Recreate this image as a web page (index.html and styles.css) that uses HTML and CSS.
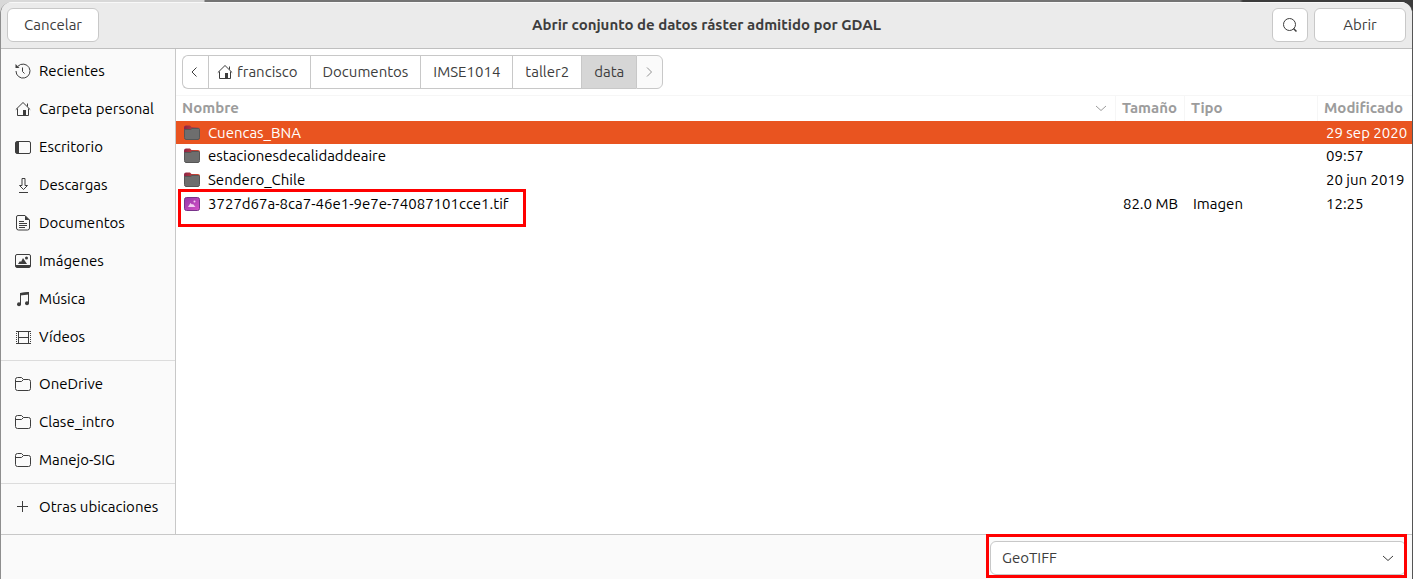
FILE: index.html
```html
<!DOCTYPE html>
<html lang="es">
<head>
<meta charset="utf-8">
<title>Abrir conjunto de datos ráster admitido por GDAL</title>
<link rel="stylesheet" href="styles.css">
</head>
<body>
<svg class="defs" aria-hidden="true">
  <defs>
    <linearGradient id="purple" x1="0" y1="0" x2="1" y2="1"><stop offset="0" stop-color="#9436a8"/><stop offset="1" stop-color="#d653c8"/></linearGradient>
    <linearGradient id="tab" x1="0" y1="0" x2="1" y2="0"><stop offset="0" stop-color="#8c2347"/><stop offset="1" stop-color="#d9502f"/></linearGradient>
  </defs>
  <symbol id="home" viewBox="0 0 16 16"><path d="M.8 8.6 8 1.5l7.2 7.1M2.5 7.5v7h11v-7M12.5 5.5V2.5" fill="none" stroke="currentColor"/><path d="M8 9h3v6H8z" fill="currentColor"/></symbol>
  <symbol id="folder" viewBox="0 0 16 16"><path d="M.5 12.500V3.500q0-2 2-2h4l2 2h5q2 0 2 2v7q0 2-2 2h-11q-2 0-2-2zM.5 5.500h6l2-2" fill="none" stroke="currentColor"/></symbol>
  <symbol id="dir" viewBox="0 0 16 16"><path d="M0 2.500Q0 .5 2 .5h4l1.500 1.500H14q2 0 2 2v4H0z" fill="url(#tab)"/><path d="M.5 4.500h6L8 3.500h6.500q1 0 1 1v8q0 2-1.500 2H2q-1.500 0-1.500-2z" fill="#6e6e6e" stroke="#565656"/></symbol>
</svg>
<div class="dialog">
  <header class="titlebar">
    <button class="button">Cancelar</button>
    <h1 class="title">Abrir conjunto de datos ráster admitido por GDAL</h1>
    <div class="actions">
      <button class="button button-icon" aria-label="Buscar"><svg class="icon" viewBox="0 0 16 16"><circle cx="7.500" cy="7.500" r="6" fill="none" stroke="currentColor"/><path d="m11.500 11.500 3 3" stroke="currentColor" stroke-width="1.500"/></svg></button>
      <button class="button button-open">Abrir</button>
    </div>
  </header>
  <div class="body">
    <nav class="sidebar">
      <div class="group">
        <a class="place" href="#"><svg class="icon" viewBox="0 0 16 16"><path d="M3 3.200A7 7 0 1 1 1 8M7.500 4.500v4l2 2" fill="none" stroke="currentColor"/><path d="M.5 1v4h4z" fill="currentColor"/></svg>Recientes</a>
        <a class="place" href="#"><svg class="icon"><use href="#home"/></svg>Carpeta personal</a>
        <a class="place" href="#"><svg class="icon" viewBox="0 0 16 16"><rect x=".5" y="2.500" width="15" height="12" rx="1.500" fill="none" stroke="currentColor"/><path d="M1 3h3v11H1z" fill="currentColor"/></svg>Escritorio</a>
        <a class="place" href="#"><svg class="icon" viewBox="0 0 16 16"><path d="M7 1.500h3v7h2.500l-4 4-4-4H7zM4 15.500h9" fill="none" stroke="currentColor"/></svg>Descargas</a>
        <a class="place" href="#"><svg class="icon" viewBox="0 0 16 16"><path d="M3 .5h7l4.500 4.500v8q0 2-2 2H3.500q-2 0-2-2v-11Q1.500.5 3 .5M4 6.500h5M4 8.500h8M4 10.500h8M4 12.500h6" fill="none" stroke="currentColor"/><path d="M10 .5V5h4.500z" fill="currentColor"/></svg>Documentos</a>
        <a class="place" href="#"><svg class="icon" viewBox="0 0 16 16"><rect x=".5" y="1.500" width="15" height="13" rx="1.500" fill="none" stroke="currentColor"/><path d="M1 12h14v2H1zM3 11l2-3 1 1 2-4 4 6z" fill="currentColor"/><circle cx="11.500" cy="5" r="1.500" fill="currentColor"/></svg>Imágenes</a>
        <a class="place" href="#"><svg class="icon" viewBox="0 0 16 16"><path d="M5.500 13V2.500l8-1V12" fill="none" stroke="currentColor"/><path d="M5 2l9-1v2.500l-9 1z" fill="currentColor"/><circle cx="4" cy="13.200" r="2" fill="currentColor"/><circle cx="12" cy="12.200" r="2" fill="currentColor"/></svg>Música</a>
        <a class="place" href="#"><svg class="icon" viewBox="0 0 16 16"><path d="M1.500 2v13M15.500 2v13" stroke="currentColor" stroke-dasharray="1 1"/><path d="M1 2.500h15M1 14.500h15M3.500 2v13M13.500 2v13M3.500 8.500h10" stroke="currentColor" fill="none"/></svg>Vídeos</a>
      </div>
      <div class="group">
        <a class="place" href="#"><svg class="icon"><use href="#folder"/></svg>OneDrive</a>
        <a class="place" href="#"><svg class="icon"><use href="#folder"/></svg>Clase_intro</a>
        <a class="place" href="#"><svg class="icon"><use href="#folder"/></svg>Manejo-SIG</a>
      </div>
      <div class="group">
        <a class="place" href="#"><svg class="icon" viewBox="0 0 16 16"><path d="M2 7.500h11M7.500 2v11" stroke="currentColor"/></svg>Otras ubicaciones</a>
      </div>
    </nav>
    <main class="content">
      <div class="pathbar">
        <button class="crumb crumb-arrow" aria-label="Atrás"><svg class="icon" viewBox="0 0 16 16"><path d="M9.500 3.500 5 8l4.500 4.500" fill="none" stroke="currentColor"/></svg></button>
        <button class="crumb crumb-home"><svg class="icon"><use href="#home"/></svg>francisco</button>
        <button class="crumb">Documentos</button>
        <button class="crumb">IMSE1014</button>
        <button class="crumb">taller2</button>
        <button class="crumb crumb-current">data</button>
        <button class="crumb crumb-arrow" aria-label="Adelante" disabled><svg class="icon" viewBox="0 0 16 16"><path d="M6 3.500 10.500 8 6 12.500" fill="none" stroke="currentColor"/></svg></button>
      </div>
      <table class="files">
        <colgroup><col><col class="col-size"><col class="col-type"><col class="col-date"></colgroup>
        <thead>
          <tr>
            <th><div class="sort">Nombre<svg class="icon" viewBox="0 0 16 16"><path d="m3 6 5 4.500L13 6" fill="none" stroke="currentColor"/></svg></div></th>
            <th class="size">Tamaño</th><th>Tipo</th><th>Modificado</th>
          </tr>
        </thead>
        <tbody>
          <tr class="selected"><td><div class="file"><svg class="icon"><use href="#dir"/></svg>Cuencas_BNA</div></td><td></td><td></td><td>29 sep 2020</td></tr>
          <tr><td><div class="file"><svg class="icon"><use href="#dir"/></svg>estacionesdecalidaddeaire</div></td><td></td><td></td><td>09:57</td></tr>
          <tr><td><div class="file"><svg class="icon"><use href="#dir"/></svg>Sendero_Chile</div></td><td></td><td></td><td>20 jun 2019</td></tr>
          <tr><td><div class="file"><svg class="icon" viewBox="0 0 16 16"><rect x=".5" y="1.500" width="15" height="13" rx="2" fill="url(#purple)" stroke="#77338a"/><path d="m4 11 2.500-4 1.500 1.500L9 8l2.500 3z" fill="#f3cdf0"/><circle cx="10.500" cy="5.500" r="1" fill="#f3cdf0"/></svg>3727d67a-8ca7-46e1-9e7e-74087101cce1.tif<span class="mark mark-file"></span></div></td><td class="size">82.0 MB</td><td>Imagen</td><td>12:25</td></tr>
        </tbody>
      </table>
    </main>
  </div>
  <footer class="footer">
    <div class="filter">
      <select class="select" aria-label="Tipo de archivo"><option>GeoTIFF</option></select>
      <svg class="icon chevron" viewBox="0 0 16 16"><path d="m3 6 5 4.500L13 6" fill="none" stroke="currentColor"/></svg>
      <span class="mark mark-filter"></span>
    </div>
  </footer>
</div>
</body>
</html>
```

FILE: styles.css
```css
* { box-sizing: border-box; }
body {
  margin: 0;
  padding-top: 2px;
  height: 100vh;
  overflow: hidden;
  background: linear-gradient(90deg, #d8d8d8 0, #d8d8d8 204px, #747474 205px, #747474 1240px, #3c3c3c 1243px);
  font: 15px/20px Ubuntu, "Noto Sans", sans-serif;
  color: #000;
}
.defs { position: absolute; width: 0; height: 0; }
.dialog {
  display: flex;
  flex-direction: column;
  height: 100%;
  border-left: 1px solid #8e8e8e;
  border-right: 1px solid #555;
  border-radius: 12px 12px 0 0;
  overflow: hidden;
  background: #fafafa;
}
.icon { width: 16px; height: 16px; flex: none; color: #3d3d3d; }
.titlebar {
  display: grid;
  grid-template-columns: 1fr auto 1fr;
  align-items: center;
  height: 47px;
  padding: 0 6px 2px;
  background: #ebebeb;
  border-top: 1px solid #f8f8f8;
  border-bottom: 1px solid #bfbfbf;
}
.title { margin: 0; font-size: 15px; font-weight: 700; color: #3d3d3d; }
.actions { display: flex; gap: 6px; justify-content: flex-end; }
.button {
  justify-self: start;
  height: 34px;
  padding: 0 16px;
  border: 1px solid #c8c8c8;
  border-radius: 6px;
  background: #fff;
  font: inherit;
  color: #3d3d3d;
}
.button-icon { display: flex; align-items: center; justify-content: center; width: 36px; padding: 0; }
.button-open { width: 92px; }
.body { display: flex; flex: 1; min-height: 0; }
.sidebar { width: 175px; flex: none; border-right: 1px solid #c8c8c8; }
.group { padding: 4px 0; }
.group:first-child { padding-top: 3px; }
.group + .group { border-top: 1px solid #dcdcdc; }
.place {
  display: flex;
  align-items: center;
  gap: 8px;
  height: 38px;
  padding-left: 14px;
  color: #000;
  text-decoration: none;
  white-space: nowrap;
}
.content { flex: 1; min-width: 0; background: #fff; }
.pathbar { display: flex; padding: 6px; }
.crumb {
  height: 34px;
  padding: 0 12px;
  border: 1px solid #c8c8c8;
  border-right-width: 0;
  background: #fff;
  font: inherit;
  color: #3d3d3d;
}
.crumb:first-child { border-radius: 6px 0 0 6px; }
.crumb:last-child { border-radius: 0 6px 6px 0; border-right-width: 1px; }
.crumb-arrow { display: flex; align-items: center; padding: 0 5px 0 4px; }
.crumb-home { display: flex; align-items: center; gap: 4px; padding: 0 12px 0 8px; }
.crumb-current { background: #d6d6d6; }
.crumb:disabled { background: #fafafa; }
.crumb:disabled .icon { color: #929292; }
.files { width: 100%; table-layout: fixed; border-collapse: separate; border-spacing: 0; }
.col-size { width: 69px; }
.col-type { width: 133px; }
.col-date { width: 94px; }
.files th {
  height: 26px;
  padding: 0 6px 2px;
  border-top: 1px solid #f6f6f6;
  border-right: 1px solid #f6f6f6;
  text-align: left;
  font-weight: 700;
  color: #9c9c9c;
}
.files th:last-child { border-right: 0; }
.files td { height: 24px; padding: 0 8px 1px; white-space: nowrap; }
.files .selected td { height: 23px; padding-bottom: 0; background: #e95420; color: #fff; }
.files .size { padding-right: 7px; padding-left: 0; text-align: right; }
.sort { display: flex; align-items: center; justify-content: space-between; }
.sort .icon { color: #9c9c9c; }
.file { position: relative; display: flex; align-items: center; gap: 8px; }
.mark { position: absolute; border: 3px solid #f00; pointer-events: none; }
.mark-file { left: -6px; top: -5px; width: 348px; height: 38px; }
.footer { display: flex; justify-content: flex-end; height: 45px; padding: 6px 6px 0; border-top: 1px solid #c8c8c8; }
.filter { position: relative; width: 416px; height: 34px; }
.select {
  appearance: none;
  width: 100%;
  height: 100%;
  padding: 0 11px;
  border: 1px solid #c8c8c8;
  border-radius: 6px;
  background: #fff;
  font: inherit;
  color: #3d3d3d;
}
.chevron { position: absolute; right: 10px; top: 9px; pointer-events: none; }
.mark-filter { left: -4px; right: -1px; top: -7px; bottom: -3px; }
```
